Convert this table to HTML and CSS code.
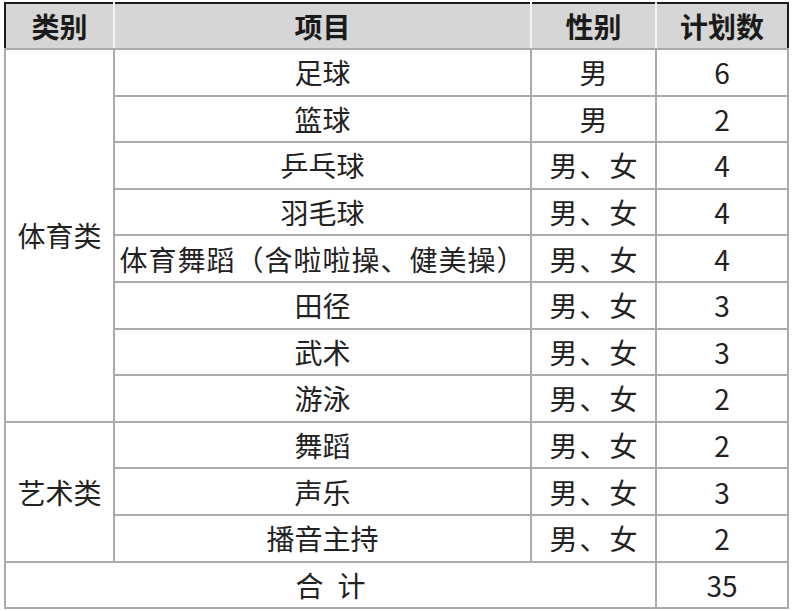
FILE: index.html
```html
<!DOCTYPE html>
<html lang="zh">
<head>
<meta charset="utf-8">
<link rel="stylesheet" href="styles.css">
</head>
<body>
<table class="plan">
  <colgroup>
    <col class="c1"><col class="c2"><col class="c3"><col class="c4">
  </colgroup>
  <thead>
    <tr class="head"><th>类别</th><th>项目</th><th>性别</th><th>计划数</th></tr>
  </thead>
  <tbody>
    <tr><td rowspan="8" class="cat">体育类</td><td>足球</td><td>男</td><td>6</td></tr>
    <tr><td>篮球</td><td>男</td><td>2</td></tr>
    <tr><td>乒乓球</td><td class="sex">男、女</td><td>4</td></tr>
    <tr><td>羽毛球</td><td class="sex">男、女</td><td>4</td></tr>
    <tr><td class="long">体育舞蹈（含啦啦操、健美操）</td><td class="sex">男、女</td><td>4</td></tr>
    <tr><td>田径</td><td class="sex">男、女</td><td>3</td></tr>
    <tr><td>武术</td><td class="sex">男、女</td><td>3</td></tr>
    <tr><td>游泳</td><td class="sex">男、女</td><td>2</td></tr>
    <tr><td rowspan="3" class="cat">艺术类</td><td>舞蹈</td><td class="sex">男、女</td><td>2</td></tr>
    <tr><td>声乐</td><td class="sex">男、女</td><td>3</td></tr>
    <tr><td>播音主持</td><td class="sex">男、女</td><td>2</td></tr>
    <tr><td colspan="3"><span class="gap">合</span>计</td><td>35</td></tr>
  </tbody>
</table>
</body>
</html>
```

FILE: styles.css
```css
html, body {
  margin: 0;
  padding: 0;
  background: #ffffff;
}

body {
  padding: 2px 0 0 4px;
}

.plan {
  border-collapse: collapse;
  table-layout: fixed;
  width: 783px;
  border: 2px solid #1c1c1c;
  font-family: "Noto Sans CJK SC", "Microsoft YaHei", sans-serif;
  font-size: 28px;
  color: #222222;
}

.c1 { width: 109px; }
.c2 { width: 417px; }
.c3 { width: 125px; }
.c4 { width: 132px; }

.plan th,
.plan td {
  padding: 0;
  text-align: center;
  vertical-align: middle;
  line-height: 1;
  white-space: nowrap;
}

.plan td {
  border: 2px solid #ababab;
  height: 44.6px;
}

.plan th {
  background: #d6d6d6;
  font-weight: 700;
  color: #1a1a1a;
  border-left: 2px solid #f2f2f2;
  border-right: 2px solid #f2f2f2;
  border-bottom: 2px solid #ababab;
  height: 44px;
}

.plan th:first-child { border-left: 2px solid #1c1c1c; }
.plan th:last-child { border-right: 2px solid #1c1c1c; }

.plan .long {
  letter-spacing: 1px;
}

.plan .sex {
  letter-spacing: 2px;
  text-indent: 2px;
}

.plan .gap {
  margin-right: 14px;
}
```
